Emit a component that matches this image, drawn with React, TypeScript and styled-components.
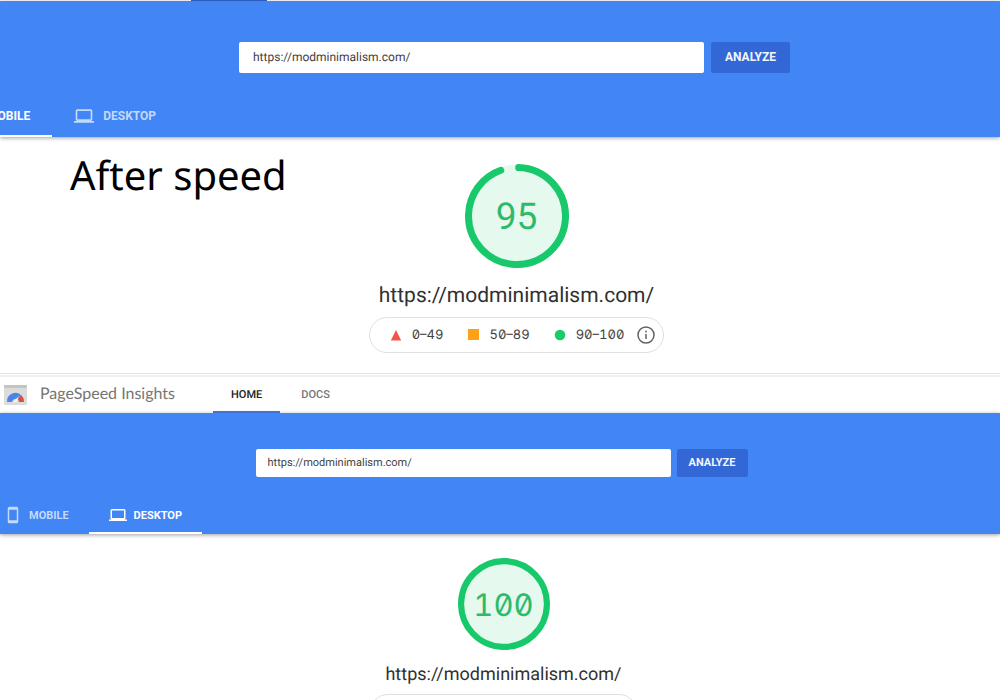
import React from 'react';
import styled, { createGlobalStyle } from 'styled-components';

const GlobalStyle = createGlobalStyle`
  *, *::before, *::after { box-sizing: border-box; }
  body {
    margin: 0;
    background: #fff;
    font-family: Roboto, "Liberation Sans", sans-serif;
    color: #212121;
    text-rendering: geometricPrecision;
  }
`;

type Size = 'large' | 'compact';
type Sized = { $size: Size };

const pick = (large: string, compact: string) => (p: Sized) =>
  p.$size === 'large' ? large : compact;

const Page = styled.div`
  height: 100vh;
  overflow: hidden;
`;

const Shot = styled.section`
  position: relative;
`;

const ClippedNav = styled.div`
  height: 1px;
  padding-left: 191px;
  background: #fff;
`;

const ClippedMarker = styled.div`
  width: 76px;
  height: 1px;
  background: #2f66d0;
`;

const Divider = styled.hr`
  height: 4px;
  margin: 0;
  border: 0;
  border-top: 1px solid #e2e2e2;
  border-bottom: 2px solid #f0f0f0;
`;

const SiteBar = styled.header`
  display: flex;
  align-items: center;
  height: 36px;
  padding-left: 4px;
  background: #fff;
`;

const Brand = styled.span`
  width: 173px;
  margin-left: 13px;
  padding-bottom: 2px;
  font-family: Lato, "Liberation Sans", sans-serif;
  font-size: 16px;
  line-height: 20px;
  color: #757575;
  white-space: nowrap;
`;

const SiteNav = styled.nav`
  display: flex;
  align-self: stretch;
  gap: 3px;
`;

const NavLink = styled.a<{ $active?: boolean }>`
  display: flex;
  align-items: center;
  padding: 0 18px;
  border-bottom: 2px solid ${(p) => (p.$active ? '#3f73cf' : 'transparent')};
  font-size: 11px;
  font-weight: 500;
  color: ${(p) => (p.$active ? '#212121' : '#757575')};
  text-decoration: none;
`;

const Hero = styled.div<Sized>`
  position: relative;
  display: flex;
  flex-direction: column;
  justify-content: space-between;
  height: ${pick('136px', '121px')};
  padding-top: ${pick('41px', '36px')};
  overflow: hidden;
  background: #4285f4;
`;

const HeroShadow = styled.div`
  box-shadow: 0 1px 4px rgba(0, 0, 0, 0.38);
`;

const SearchForm = styled.form<Sized>`
  display: flex;
  justify-content: center;
  gap: ${pick('7px', '6px')};
  height: ${pick('31px', '28px')};
  padding-left: ${pick('29px', '3px')};
`;

const UrlInput = styled.input<Sized>`
  width: ${pick('465px', '415px')};
  padding: ${pick('0 14px 2px', '0 12px 1px')};
  border: 0;
  border-radius: 2px;
  background: #fff;
  font-family: inherit;
  font-size: ${pick('12px', '11px')};
  color: #424242;
  text-rendering: inherit;
`;

const AnalyzeButton = styled.button<Sized>`
  width: ${pick('79px', '71px')};
  padding: 0 0 2px;
  border: 0;
  border-radius: 2px;
  background: #3367d6;
  font-family: inherit;
  font-size: ${pick('12px', '11px')};
  font-weight: 700;
  color: #f1f6ff;
`;

const Tabs = styled.div<Sized>`
  display: flex;
  height: ${pick('42px', '38px')};
  margin-left: ${pick('-64px', '-16px')};
`;

const Tab = styled.button<Sized & { $active?: boolean }>`
  display: flex;
  align-items: center;
  gap: ${pick('9px', '7px')};
  padding: ${pick('2px 22px 0', '2px 20px 0')};
  border: 0;
  border-bottom: 2px solid ${(p) => (p.$active ? '#fff' : 'transparent')};
  background: none;
  font-family: inherit;
  font-size: ${pick('12px', '11px')};
  font-weight: 700;
  color: ${(p) => (p.$active ? '#fff' : '#c3dafc')};
`;

const Caption = styled.h1`
  position: absolute;
  top: 147px;
  left: 70px;
  margin: 0;
  font-family: "Noto Sans", "Open Sans", sans-serif;
  font-size: 40px;
  font-weight: 400;
  line-height: 56px;
  color: #000;
`;

const Results = styled.div<Sized>`
  display: flex;
  flex-direction: column;
  align-items: center;
  padding: ${pick('27px 0 20px 33px', '24px 0 20px 7px')};
`;

const Gauge = styled.div<Sized>`
  display: grid;
  place-items: center;
  width: ${pick('104px', '92px')};
  height: ${pick('104px', '92px')};
  > * { grid-area: 1 / 1; }
`;

const Score = styled.span<Sized>`
  padding-top: 4px;
  font-family: ${pick('Roboto', 'Inter')}, sans-serif;
  font-size: ${pick('37px', '31px')};
  font-weight: 400;
  line-height: 40px;
  font-feature-settings: "tnum", "zero";
  color: #2dbb6b;
`;

const SiteUrl = styled.div<Sized>`
  margin-top: ${pick('14px', '13px')};
  font-size: ${pick('21px', '18px')};
  line-height: ${pick('28px', '24px')};
  color: #303030;
`;

const Legend = styled.ul<Sized>`
  display: flex;
  align-items: center;
  height: ${pick('36px', '32px')};
  margin: 7px 0 0;
  padding: ${pick('0 7px 0 20px', '0 6px 0 18px')};
  border: 1px solid #e0e0e0;
  border-radius: 18px;
  list-style: none;
  font-family: Inter, Roboto, sans-serif;
  font-size: ${pick('13px', '11px')};
  font-feature-settings: "tnum", "zero";
  color: #424242;
`;

const Range = styled.li<Sized>`
  display: flex;
  align-items: center;
  gap: ${pick('10px', '9px')};
  margin-right: ${pick('24px', '22px')};
  &:nth-child(3) { margin-right: 12px; }
`;

const InfoItem = styled.li`
  display: flex;
`;

const InfoButton = styled.button`
  display: flex;
  padding: 0;
  border: 0;
  background: none;
  color: #616161;
`;

const Icon = styled.svg`
  display: block;
  flex: none;
`;

const LaptopIcon = ({ size }: { size: number }) => (
  <Icon width={size} height={size} viewBox="0 0 24 24" fill="currentColor" aria-hidden="true">
    <path d="M20 18a2 2 0 0 0 2-2V6a2 2 0 0 0-2-2H4a2 2 0 0 0-2 2v10a2 2 0 0 0 2 2H0v2h24v-2h-4zM4 6h16v10H4V6z" />
  </Icon>
);

const PhoneIcon = ({ size }: { size: number }) => (
  <Icon width={size} height={size} viewBox="0 0 24 24" fill="currentColor" aria-hidden="true">
    <path d="M17 1H7a2 2 0 0 0-2 2v18a2 2 0 0 0 2 2h10a2 2 0 0 0 2-2V3a2 2 0 0 0-2-2zm0 18H7V5h10v14z" />
  </Icon>
);

const LogoIcon = () => (
  <Icon width="23" height="20" viewBox="0 0 23 20" aria-hidden="true">
    <rect width="23" height="20" rx="1" fill="#dcdcdc" />
    <rect width="23" height="3" rx="1" fill="#c4c4c4" />
    <path d="M3 17a8.500 8.500 0 0 1 14-7l-3.500 4A4 4 0 0 0 8 17z" fill="#4a86e8" />
    <path d="M17 10a8.500 8.500 0 0 1 3 7h-5a4 4 0 0 0-1.500-3z" fill="#d35445" />
    <path d="M9.500 17l5.500-6-2.500 6z" fill="#fafafa" />
  </Icon>
);

const InfoIcon = ({ size }: { size: number }) => (
  <Icon width={size} height={size} viewBox="0 0 20 20" fill="none" stroke="currentColor" aria-hidden="true">
    <circle cx="10" cy="10" r="8" strokeWidth="1.500" />
    <path d="M10 9v5M10 5.700v1.700" strokeWidth="1.500" />
  </Icon>
);

const Marker = ({ kind }: { kind: 'poor' | 'medium' | 'good' }) => (
  <Icon width="12" height="12" viewBox="0 0 12 12" aria-hidden="true">
    {kind === 'poor' && <path d="M6 1l5.200 10.500H.8z" fill="#f4524d" />}
    {kind === 'medium' && <rect x="1" y="0" width="11" height="11" fill="#ffa114" />}
    {kind === 'good' && <circle cx="6" cy="6" r="5.300" fill="#18cc6b" />}
  </Icon>
);

function Dial({ score, size }: { score: number; size: Size }) {
  const full = score === 100;
  const px = size === 'large' ? 104 : 92;
  return (
    <Gauge $size={size}>
      <svg width={px} height={px} viewBox="0 0 104 104" aria-hidden="true">
        <circle cx="52" cy="52" r="51.500" fill="#e5f9ee" />
        {/* The round caps add about one percent, so the arc is drawn that much shorter. */}
        <circle
          cx="52"
          cy="52"
          r="48.500"
          fill="none"
          stroke="#18c96c"
          strokeWidth="7"
          strokeLinecap="round"
          pathLength={100}
          strokeDasharray={full ? undefined : `${score - 1} 100`}
          transform="rotate(-88 52 52)"
        />
      </svg>
      <Score $size={size}>{score}</Score>
    </Gauge>
  );
}

function Search({ size }: { size: Size }) {
  return (
    <SearchForm $size={size} onSubmit={(e) => e.preventDefault()}>
      <UrlInput
        $size={size}
        type="text"
        aria-label="Web page URL"
        defaultValue="https://modminimalism.com/"
      />
      <AnalyzeButton $size={size} type="submit">ANALYZE</AnalyzeButton>
    </SearchForm>
  );
}

function DeviceTabs({ size, active }: { size: Size; active: 'mobile' | 'desktop' }) {
  const icon = size === 'large' ? 20 : 18;
  return (
    <Tabs $size={size} role="tablist">
      <Tab $size={size} $active={active === 'mobile'} role="tab" aria-selected={active === 'mobile'}>
        <PhoneIcon size={icon} />
        MOBILE
      </Tab>
      <Tab $size={size} $active={active === 'desktop'} role="tab" aria-selected={active === 'desktop'}>
        <LaptopIcon size={icon} />
        DESKTOP
      </Tab>
    </Tabs>
  );
}

function Report({ size, score }: { size: Size; score: number }) {
  return (
    <Results $size={size}>
      <Dial score={score} size={size} />
      <SiteUrl $size={size}>https://modminimalism.com/</SiteUrl>
      <Legend $size={size}>
        <Range $size={size}><Marker kind="poor" />0–49</Range>
        <Range $size={size}><Marker kind="medium" />50–89</Range>
        <Range $size={size}><Marker kind="good" />90–100</Range>
        <InfoItem>
          <InfoButton type="button" aria-label="About the score scale">
            <InfoIcon size={size === 'large' ? 20 : 18} />
          </InfoButton>
        </InfoItem>
      </Legend>
    </Results>
  );
}

export default function App() {
  return (
    <>
      <GlobalStyle />
      <Page>
        <Shot>
          <ClippedNav><ClippedMarker /></ClippedNav>
          <HeroShadow>
            <Hero $size="large">
              <Search size="large" />
              <DeviceTabs size="large" active="mobile" />
            </Hero>
          </HeroShadow>
          <Caption>After speed</Caption>
          <Report size="large" score={95} />
        </Shot>
        <Divider />
        <Shot>
          <SiteBar>
            <LogoIcon />
            <Brand>PageSpeed Insights</Brand>
            <SiteNav>
              <NavLink href="#home" $active>HOME</NavLink>
              <NavLink href="#docs">DOCS</NavLink>
            </SiteNav>
          </SiteBar>
          <HeroShadow>
            <Hero $size="compact">
              <Search size="compact" />
              <DeviceTabs size="compact" active="desktop" />
            </Hero>
          </HeroShadow>
          <Report size="compact" score={100} />
        </Shot>
      </Page>
    </>
  );
}
